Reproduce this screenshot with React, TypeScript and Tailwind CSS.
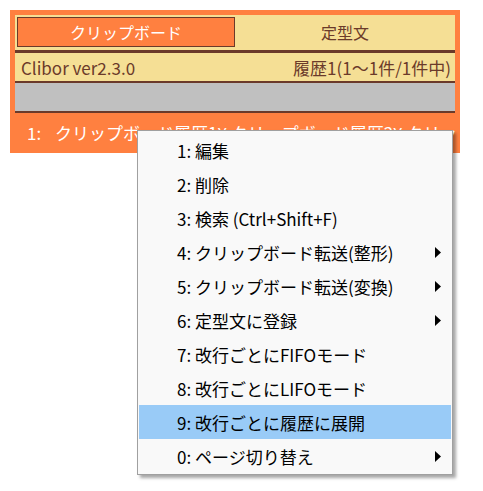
import React from 'react'

const menuItems = [
  { label: '1: 編集' },
  { label: '2: 削除' },
  { label: '3: 検索 (Ctrl+Shift+F)' },
  { label: '4: クリップボード転送(整形)', sub: true },
  { label: '5: クリップボード転送(変換)', sub: true },
  { label: '6: 定型文に登録', sub: true },
  { label: '7: 改行ごとにFIFOモード' },
  { label: '8: 改行ごとにLIFOモード' },
  { label: '9: 改行ごとに履歴に展開', active: true },
  { label: '0: ページ切り替え', sub: true },
]

const font = { fontFamily: '"Noto Sans CJK JP", "Noto Sans", sans-serif' }

function SubArrow() {
  return (
    <svg width="6" height="11" viewBox="0 0 6 11" className="shrink-0">
      <path d="M0 0 L6 5.5 L0 11 Z" fill="#000" />
    </svg>
  )
}

export default function App() {
  return (
    <div className="relative w-[483px] h-[491px] bg-white overflow-hidden" style={font}>
      {/* Clibor window */}
      <div className="ml-[10px] mt-[10px] w-[450px] h-[143px] bg-[#ff8040] p-[5px]">
        <div className="bg-[#f5df95]">
          {/* tabs */}
          <div className="flex h-[35px] pl-[2px] pt-[2px] pb-[3px]">
            <div className="w-[218px] h-[30px] border border-[#6b3a2a] bg-[#ff8040] flex items-center justify-center text-white text-[16px] leading-none">
              クリップボード
            </div>
            <div className="flex-1 flex items-center justify-center text-[#6b3a2a] text-[16px] leading-none">
              定型文
            </div>
          </div>
          <div className="h-[3px] bg-[#6b3a2a]" />
          <div className="h-[28px] flex items-center justify-between pl-[6px] pr-[4px] text-[#6b3a2a] text-[17px] leading-none">
            <span>Clibor ver2.3.0</span>
            <span>履歴1(1～1件/1件中)</span>
          </div>
          <div className="h-[2px] bg-[#6b3a2a]" />
          <div className="h-[28px] bg-[#c0c0c0]" />
          <div className="h-[2px] bg-[#6b3a2a]" />
        </div>
        <div className="h-[38px] flex items-center pl-[12px] text-white text-[17px] leading-none whitespace-nowrap overflow-hidden">
          <span className="inline-block w-[28px] shrink-0">1:</span>
          <span>クリップボード履歴1¥ クリップボード履歴2¥ クリップボード履歴3</span>
        </div>
      </div>

      {/* context menu */}
      <div className="absolute left-[137px] top-[130px] w-[316px] h-[345px] border border-[#a0a0a0] bg-[#f9f9f9] pt-[2px] px-[1px] shadow-[3px_3px_3px_rgba(0,0,0,0.35)]">
        {menuItems.map((item) => (
          <div
            key={item.label}
            className={`h-[34px] flex items-center justify-between pl-[38px] pr-[10px] text-[17px] leading-none text-black ${
              item.active ? 'bg-[#99cbf7]' : ''
            }`}
          >
            <span>{item.label}</span>
            {item.sub && <SubArrow />}
          </div>
        ))}
      </div>
    </div>
  )
}
